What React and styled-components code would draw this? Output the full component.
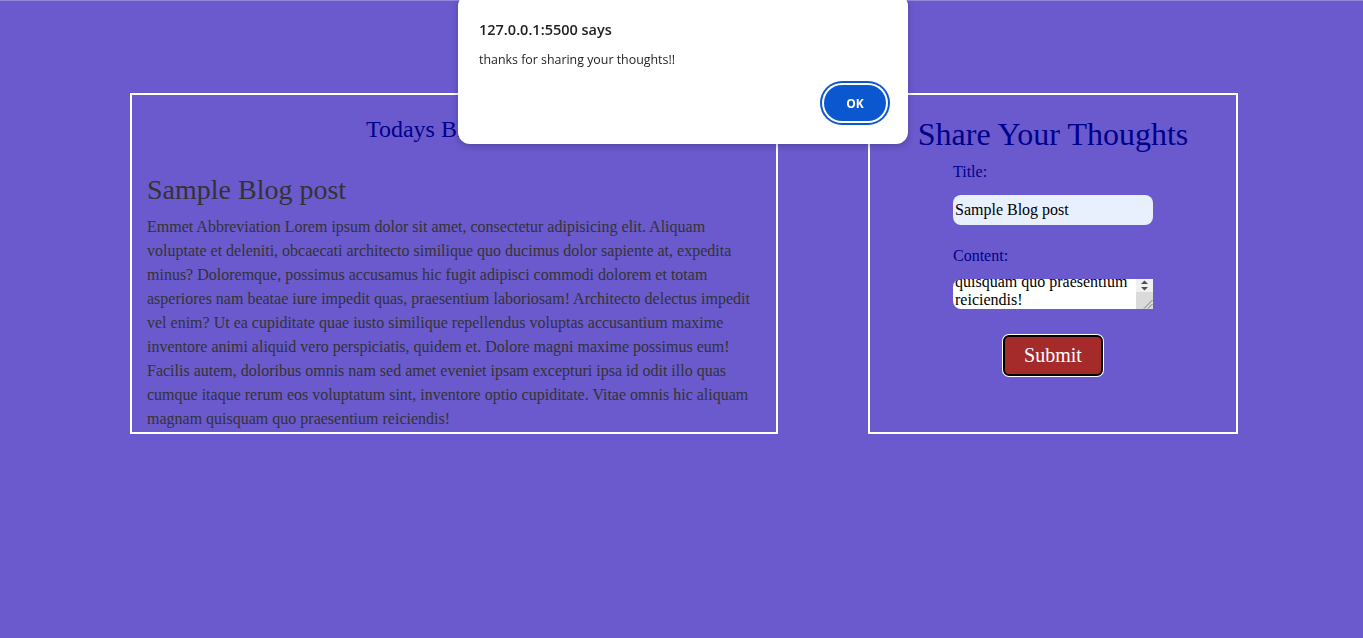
import React, { useEffect, useRef } from "react";
import styled, { createGlobalStyle } from "styled-components";

const GlobalStyle = createGlobalStyle`
  html, body {
    margin: 0;
    padding: 0;
  }
  body {
    background-color: #6a5acd;
    border-top: 1px solid #9489d8;
    min-height: 100vh;
    box-sizing: border-box;
    font-family: "Liberation Serif", "Times New Roman", serif;
  }
`;

const Page = styled.main`
  display: flex;
  flex-direction: row;
  align-items: stretch;
  gap: 90px;
  padding: 92px 0 0 130px;
`;

const Panel = styled.section`
  box-sizing: border-box;
  width: ${(p) => p.$width}px;
  border: 2px solid #ffffff;
  display: flex;
  flex-direction: column;
`;

const BlogPanel = styled(Panel)`
  padding: 0 22px 0 15px;
`;

const PanelTitle = styled.h2`
  margin: 21px 0 0;
  font-size: 24px;
  line-height: 27px;
  font-weight: normal;
  color: #00008b;
  text-align: center;
`;

const PostTitle = styled.h3`
  margin: 31px 0 9px;
  font-size: 28px;
  line-height: 32px;
  font-weight: normal;
  color: #333333;
`;

const PostBody = styled.p`
  margin: 0 0 1px;
  font-size: 16px;
  line-height: 24px;
  color: #333333;
`;

const FormTitle = styled.h1`
  margin: 21px 0 0;
  font-size: 32px;
  line-height: 37px;
  font-weight: normal;
  color: #00008b;
  text-align: center;
`;

const Form = styled.form`
  display: flex;
  flex-direction: column;
  align-items: center;
  padding: 10px 0 0;
`;

const Field = styled.div`
  display: flex;
  flex-direction: column;
  width: 200px;
  margin-bottom: ${(p) => p.$gap}px;
`;

const Label = styled.label`
  font-size: 16px;
  line-height: 18px;
  color: #00008b;
  margin-bottom: 14px;
`;

const TextInput = styled.input`
  box-sizing: border-box;
  width: 200px;
  height: 30px;
  border: none;
  border-radius: 8px;
  padding: 0 2px;
  background-color: #e8f0fe;
  font-family: "Liberation Serif", "Times New Roman", serif;
  font-size: 16px;
  color: #000000;
  outline: none;
`;

const TextAreaBox = styled.div`
  display: flex;
  flex-direction: row;
  width: 200px;
  height: 30px;
  border-radius: 8px 0 0 8px;
  overflow: hidden;
  background-color: #ffffff;
`;

const TextArea = styled.textarea`
  box-sizing: border-box;
  flex: 1;
  min-width: 0;
  height: 30px;
  border: none;
  padding: 0 0 0 2px;
  background: transparent;
  font-family: "Liberation Serif", "Times New Roman", serif;
  font-size: 16px;
  line-height: 18px;
  color: #000000;
  outline: none;
  resize: none;
  scrollbar-width: none;
  &::-webkit-scrollbar {
    display: none;
  }
`;

// the textarea's classic scrollbar + resize grip
const ScrollGutter = styled.div`
  width: 17px;
  display: flex;
  flex-direction: column;
  background: #dadada;
`;

const ScrollButtons = styled.div`
  height: 13px;
  background: #f0f0f0;
  display: flex;
  align-items: center;
  justify-content: center;
`;

const Grip = styled.div`
  flex: 1;
  display: flex;
  align-items: flex-end;
  justify-content: flex-end;
`;

const SubmitButton = styled.button`
  box-sizing: border-box;
  width: 100px;
  height: 41px;
  margin-top: 1px;
  background-color: #a52a2a;
  color: #ffffff;
  border: 2px solid #000000;
  border-radius: 6px;
  box-shadow: 0 0 0 1px #ffffff;
  font-family: "Liberation Serif", "Times New Roman", serif;
  font-size: 20px;
  cursor: pointer;
`;

// browser alert() look-alike, lies on top of the page
const Dialog = styled.div`
  position: fixed;
  top: -6px;
  left: 458px;
  width: 450px;
  height: 150px;
  box-sizing: border-box;
  background: #ffffff;
  border-radius: 12px;
  box-shadow: 0 2px 6px rgba(40, 30, 90, 0.35);
  padding: 26px 18px 0 21px;
  display: flex;
  flex-direction: column;
  font-family: "Open Sans", "Noto Sans", sans-serif;
`;

const DialogTitle = styled.div`
  font-size: 14.5px;
  font-weight: 600;
  color: #1f1f1f;
  line-height: 20px;
`;

const DialogMessage = styled.div`
  margin-top: 10px;
  font-size: 12.4px;
  color: #1f1f1f;
  line-height: 20px;
`;

const DialogActions = styled.div`
  display: flex;
  justify-content: flex-end;
  margin-top: 15px;
  padding-right: 4px;
`;

const OkButton = styled.button`
  width: 62px;
  height: 36px;
  border: none;
  border-radius: 18px;
  background: #0b57d0;
  color: #ffffff;
  font-family: "Open Sans", "Noto Sans", sans-serif;
  font-size: 12px;
  font-weight: 700;
  box-shadow: 0 0 0 2px #ffffff, 0 0 0 4px #0b57d0;
`;

const POST =
  "Emmet Abbreviation Lorem ipsum dolor sit amet, consectetur adipisicing elit. Aliquam voluptate et deleniti, obcaecati architecto similique quo ducimus dolor sapiente at, expedita minus? Doloremque, possimus accusamus hic fugit adipisci commodi dolorem et totam asperiores nam beatae iure impedit quas, praesentium laboriosam! Architecto delectus impedit vel enim? Ut ea cupiditate quae iusto similique repellendus voluptas accusantium maxime inventore animi aliquid vero perspiciatis, quidem et. Dolore magni maxime possimus eum! Facilis autem, doloribus omnis nam sed amet eveniet ipsam excepturi ipsa id odit illo quas cumque itaque rerum eos voluptatum sint, inventore optio cupiditate. Vitae omnis hic aliquam magnam quisquam quo praesentium reiciendis!";

function App() {
  const contentRef = useRef(null);

  useEffect(() => {
    const el = contentRef.current;
    if (el) el.scrollTop = el.scrollHeight;
  }, []);

  return (
    <>
      <GlobalStyle />
      <Page>
        <BlogPanel $width={648}>
          <PanelTitle>Todays Blog Post</PanelTitle>
          <PostTitle>Sample Blog post</PostTitle>
          <PostBody>{POST}</PostBody>
        </BlogPanel>
        <Panel $width={370}>
          <FormTitle>Share Your Thoughts</FormTitle>
          <Form onSubmit={(e) => e.preventDefault()}>
            <Field $gap={22}>
              <Label htmlFor="title">Title:</Label>
              <TextInput id="title" defaultValue="Sample Blog post" />
            </Field>
            <Field $gap={25}>
              <Label htmlFor="content">Content:</Label>
              <TextAreaBox>
                <TextArea id="content" ref={contentRef} defaultValue={POST} />
                <ScrollGutter>
                  <ScrollButtons>
                    <svg width="9" height="11" viewBox="0 0 9 11">
                      <path d="M4.5 0.5 L8 4 L1 4 Z" fill="#505050" />
                      <path d="M1 7 L8 7 L4.5 10.5 Z" fill="#505050" />
                    </svg>
                  </ScrollButtons>
                  <Grip>
                    <svg width="10" height="10" viewBox="0 0 10 10">
                      <path d="M1 9.5 L9.5 1 M5 9.5 L9.5 5" stroke="#7a7a7a" strokeWidth="1" />
                    </svg>
                  </Grip>
                </ScrollGutter>
              </TextAreaBox>
            </Field>
            <SubmitButton type="submit">Submit</SubmitButton>
          </Form>
        </Panel>
      </Page>
      <Dialog role="alertdialog">
        <DialogTitle>127.0.0.1:5500 says</DialogTitle>
        <DialogMessage>thanks for sharing your thoughts!!</DialogMessage>
        <DialogActions>
          <OkButton>OK</OkButton>
        </DialogActions>
      </Dialog>
    </>
  );
}

export default App;
